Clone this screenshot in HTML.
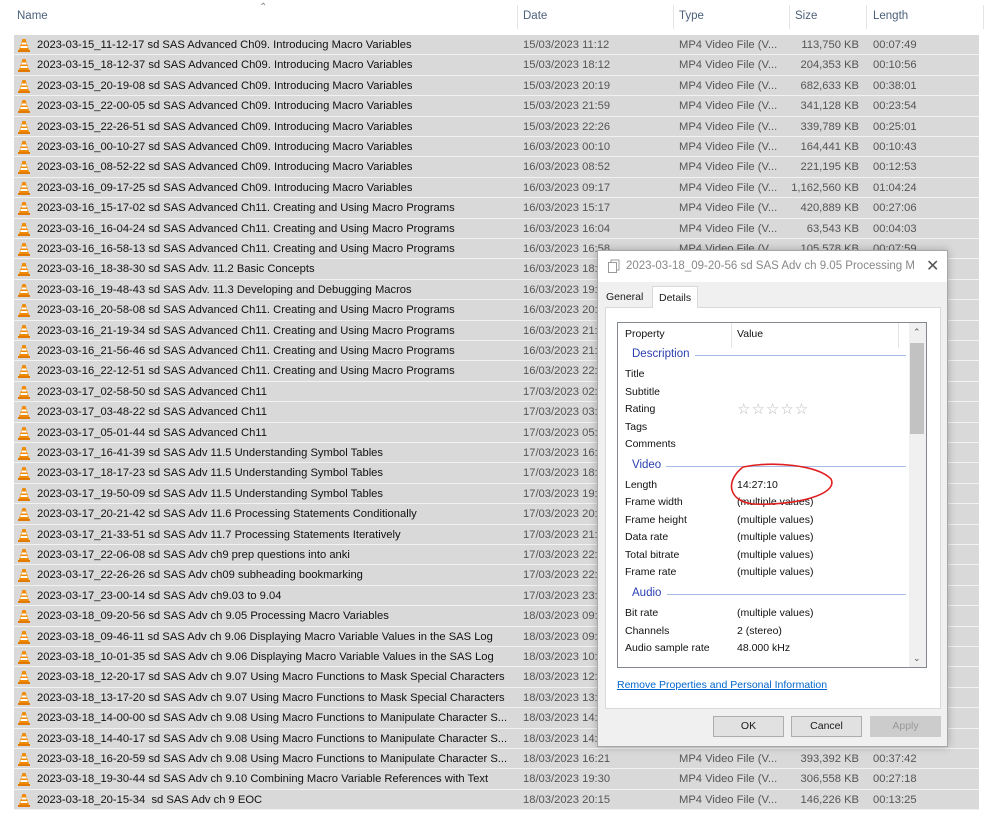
<!DOCTYPE html>
<html><head><meta charset="utf-8"><style>
*{margin:0;padding:0;box-sizing:border-box}
body{width:999px;height:822px;background:#fff;font-family:"Liberation Sans",sans-serif;font-size:11.2px;color:#1a1a1a;position:relative;overflow:hidden}
.h{position:absolute;top:10px;color:#4c607a;font-size:11.5px}
.sep{position:absolute;top:5px;width:1px;height:24px;background:#e5e5e5}
.r{position:absolute;left:14px;width:965px;height:20.4px;background:#d9d9d9;border-bottom:1px solid #f2f2f2}
.r span{position:absolute;top:4px;white-space:nowrap}
.n{left:23px;color:#111;max-width:478px;overflow:hidden}.d{left:509px;color:#555}.t{left:665px;color:#555}.s{right:120px;color:#555}.l{left:859px;color:#555}
.ic{position:absolute;left:4px;top:3px}
#dlg{position:absolute;left:597px;top:250px;width:351px;height:497px;background:#f0f0f0;border:1px solid #a8a8a8;box-shadow:0 0 8px rgba(0,0,0,.25)}
#tb{position:absolute;left:0;top:0;width:349px;height:31px;background:#fff}
.p{position:absolute;font-size:10.5px;color:#111;white-space:nowrap}
.g{position:absolute;font-size:11.5px;color:#2a3fb0}
.gl{position:absolute;height:1px;background:#a7bce6}
.btn{position:absolute;top:465px;width:71px;height:21px;background:#e1e1e1;border:1px solid #adadad;text-align:center;line-height:19px;font-size:10.5px}
</style></head><body>
<div class="h" style="left:17px">Name</div>
<div style="position:absolute;left:259px;top:2px;color:#888;font-size:10px">&#8963;</div>
<div class="sep" style="left:517px"></div><div class="h" style="left:523px">Date</div>
<div class="sep" style="left:673px"></div><div class="h" style="left:679px">Type</div>
<div class="sep" style="left:789px"></div><div class="h" style="left:795px">Size</div>
<div class="sep" style="left:866px"></div><div class="h" style="left:873px">Length</div>
<div class="sep" style="left:983px"></div>

<svg width="0" height="0" style="position:absolute"><defs><symbol id="cone" viewBox="0 0 12 14"><path d="M4.5 1h3l3.5 11h-10z" fill="#f08a00"/><path d="M3.8 4.5h4.4l.6 2h-5.6zM2.8 8h6.4l.6 2h-7.6z" fill="#fff"/><rect x="0" y="12" width="12" height="2" fill="#e07a00"/></symbol></defs></svg>

<div class="r" style="top:35px"><svg class="ic" width="12" height="14"><use href="#cone"/></svg><span class="n">2023-03-15_11-12-17 sd SAS Advanced Ch09. Introducing Macro Variables</span><span class="d">15/03/2023 11:12</span><span class="t">MP4 Video File (V...</span><span class="s">113,750 KB</span><span class="l">00:07:49</span></div>
<div class="r" style="top:55.4px"><svg class="ic" width="12" height="14"><use href="#cone"/></svg><span class="n">2023-03-15_18-12-37 sd SAS Advanced Ch09. Introducing Macro Variables</span><span class="d">15/03/2023 18:12</span><span class="t">MP4 Video File (V...</span><span class="s">204,353 KB</span><span class="l">00:10:56</span></div>
<div class="r" style="top:75.8px"><svg class="ic" width="12" height="14"><use href="#cone"/></svg><span class="n">2023-03-15_20-19-08 sd SAS Advanced Ch09. Introducing Macro Variables</span><span class="d">15/03/2023 20:19</span><span class="t">MP4 Video File (V...</span><span class="s">682,633 KB</span><span class="l">00:38:01</span></div>
<div class="r" style="top:96.2px"><svg class="ic" width="12" height="14"><use href="#cone"/></svg><span class="n">2023-03-15_22-00-05 sd SAS Advanced Ch09. Introducing Macro Variables</span><span class="d">15/03/2023 21:59</span><span class="t">MP4 Video File (V...</span><span class="s">341,128 KB</span><span class="l">00:23:54</span></div>
<div class="r" style="top:116.6px"><svg class="ic" width="12" height="14"><use href="#cone"/></svg><span class="n">2023-03-15_22-26-51 sd SAS Advanced Ch09. Introducing Macro Variables</span><span class="d">15/03/2023 22:26</span><span class="t">MP4 Video File (V...</span><span class="s">339,789 KB</span><span class="l">00:25:01</span></div>
<div class="r" style="top:137px"><svg class="ic" width="12" height="14"><use href="#cone"/></svg><span class="n">2023-03-16_00-10-27 sd SAS Advanced Ch09. Introducing Macro Variables</span><span class="d">16/03/2023 00:10</span><span class="t">MP4 Video File (V...</span><span class="s">164,441 KB</span><span class="l">00:10:43</span></div>
<div class="r" style="top:157.4px"><svg class="ic" width="12" height="14"><use href="#cone"/></svg><span class="n">2023-03-16_08-52-22 sd SAS Advanced Ch09. Introducing Macro Variables</span><span class="d">16/03/2023 08:52</span><span class="t">MP4 Video File (V...</span><span class="s">221,195 KB</span><span class="l">00:12:53</span></div>
<div class="r" style="top:177.8px"><svg class="ic" width="12" height="14"><use href="#cone"/></svg><span class="n">2023-03-16_09-17-25 sd SAS Advanced Ch09. Introducing Macro Variables</span><span class="d">16/03/2023 09:17</span><span class="t">MP4 Video File (V...</span><span class="s">1,162,560 KB</span><span class="l">01:04:24</span></div>
<div class="r" style="top:198.2px"><svg class="ic" width="12" height="14"><use href="#cone"/></svg><span class="n">2023-03-16_15-17-02 sd SAS Advanced Ch11. Creating and Using Macro Programs</span><span class="d">16/03/2023 15:17</span><span class="t">MP4 Video File (V...</span><span class="s">420,889 KB</span><span class="l">00:27:06</span></div>
<div class="r" style="top:218.6px"><svg class="ic" width="12" height="14"><use href="#cone"/></svg><span class="n">2023-03-16_16-04-24 sd SAS Advanced Ch11. Creating and Using Macro Programs</span><span class="d">16/03/2023 16:04</span><span class="t">MP4 Video File (V...</span><span class="s">63,543 KB</span><span class="l">00:04:03</span></div>
<div class="r" style="top:239px"><svg class="ic" width="12" height="14"><use href="#cone"/></svg><span class="n">2023-03-16_16-58-13 sd SAS Advanced Ch11. Creating and Using Macro Programs</span><span class="d">16/03/2023 16:58</span><span class="t">MP4 Video File (V...</span><span class="s">105,578 KB</span><span class="l">00:07:59</span></div>
<div class="r" style="top:259.4px"><svg class="ic" width="12" height="14"><use href="#cone"/></svg><span class="n">2023-03-16_18-38-30 sd SAS Adv. 11.2 Basic Concepts</span><span class="d">16/03/2023 18:38</span></div>
<div class="r" style="top:279.8px"><svg class="ic" width="12" height="14"><use href="#cone"/></svg><span class="n">2023-03-16_19-48-43 sd SAS Adv. 11.3 Developing and Debugging Macros</span><span class="d">16/03/2023 19:48</span></div>
<div class="r" style="top:300.2px"><svg class="ic" width="12" height="14"><use href="#cone"/></svg><span class="n">2023-03-16_20-58-08 sd SAS Advanced Ch11. Creating and Using Macro Programs</span><span class="d">16/03/2023 20:58</span></div>
<div class="r" style="top:320.6px"><svg class="ic" width="12" height="14"><use href="#cone"/></svg><span class="n">2023-03-16_21-19-34 sd SAS Advanced Ch11. Creating and Using Macro Programs</span><span class="d">16/03/2023 21:19</span></div>
<div class="r" style="top:341px"><svg class="ic" width="12" height="14"><use href="#cone"/></svg><span class="n">2023-03-16_21-56-46 sd SAS Advanced Ch11. Creating and Using Macro Programs</span><span class="d">16/03/2023 21:56</span></div>
<div class="r" style="top:361.4px"><svg class="ic" width="12" height="14"><use href="#cone"/></svg><span class="n">2023-03-16_22-12-51 sd SAS Advanced Ch11. Creating and Using Macro Programs</span><span class="d">16/03/2023 22:12</span></div>
<div class="r" style="top:381.8px"><svg class="ic" width="12" height="14"><use href="#cone"/></svg><span class="n">2023-03-17_02-58-50 sd SAS Advanced Ch11</span><span class="d">17/03/2023 02:58</span></div>
<div class="r" style="top:402.2px"><svg class="ic" width="12" height="14"><use href="#cone"/></svg><span class="n">2023-03-17_03-48-22 sd SAS Advanced Ch11</span><span class="d">17/03/2023 03:48</span></div>
<div class="r" style="top:422.6px"><svg class="ic" width="12" height="14"><use href="#cone"/></svg><span class="n">2023-03-17_05-01-44 sd SAS Advanced Ch11</span><span class="d">17/03/2023 05:01</span></div>
<div class="r" style="top:443px"><svg class="ic" width="12" height="14"><use href="#cone"/></svg><span class="n">2023-03-17_16-41-39 sd SAS Adv 11.5 Understanding Symbol Tables</span><span class="d">17/03/2023 16:41</span></div>
<div class="r" style="top:463.4px"><svg class="ic" width="12" height="14"><use href="#cone"/></svg><span class="n">2023-03-17_18-17-23 sd SAS Adv 11.5 Understanding Symbol Tables</span><span class="d">17/03/2023 18:17</span></div>
<div class="r" style="top:483.8px"><svg class="ic" width="12" height="14"><use href="#cone"/></svg><span class="n">2023-03-17_19-50-09 sd SAS Adv 11.5 Understanding Symbol Tables</span><span class="d">17/03/2023 19:50</span></div>
<div class="r" style="top:504.2px"><svg class="ic" width="12" height="14"><use href="#cone"/></svg><span class="n">2023-03-17_20-21-42 sd SAS Adv 11.6 Processing Statements Conditionally</span><span class="d">17/03/2023 20:21</span></div>
<div class="r" style="top:524.6px"><svg class="ic" width="12" height="14"><use href="#cone"/></svg><span class="n">2023-03-17_21-33-51 sd SAS Adv 11.7 Processing Statements Iteratively</span><span class="d">17/03/2023 21:33</span></div>
<div class="r" style="top:545px"><svg class="ic" width="12" height="14"><use href="#cone"/></svg><span class="n">2023-03-17_22-06-08 sd SAS Adv ch9 prep questions into anki</span><span class="d">17/03/2023 22:06</span></div>
<div class="r" style="top:565.4px"><svg class="ic" width="12" height="14"><use href="#cone"/></svg><span class="n">2023-03-17_22-26-26 sd SAS Adv ch09 subheading bookmarking</span><span class="d">17/03/2023 22:26</span></div>
<div class="r" style="top:585.8px"><svg class="ic" width="12" height="14"><use href="#cone"/></svg><span class="n">2023-03-17_23-00-14 sd SAS Adv ch9.03 to 9.04</span><span class="d">17/03/2023 23:00</span></div>
<div class="r" style="top:606.2px"><svg class="ic" width="12" height="14"><use href="#cone"/></svg><span class="n">2023-03-18_09-20-56 sd SAS Adv ch 9.05 Processing Macro Variables</span><span class="d">18/03/2023 09:20</span></div>
<div class="r" style="top:626.6px"><svg class="ic" width="12" height="14"><use href="#cone"/></svg><span class="n">2023-03-18_09-46-11 sd SAS Adv ch 9.06 Displaying Macro Variable Values in the SAS Log</span><span class="d">18/03/2023 09:46</span></div>
<div class="r" style="top:647px"><svg class="ic" width="12" height="14"><use href="#cone"/></svg><span class="n">2023-03-18_10-01-35 sd SAS Adv ch 9.06 Displaying Macro Variable Values in the SAS Log</span><span class="d">18/03/2023 10:01</span></div>
<div class="r" style="top:667.4px"><svg class="ic" width="12" height="14"><use href="#cone"/></svg><span class="n">2023-03-18_12-20-17 sd SAS Adv ch 9.07 Using Macro Functions to Mask Special Characters</span><span class="d">18/03/2023 12:20</span></div>
<div class="r" style="top:687.8px"><svg class="ic" width="12" height="14"><use href="#cone"/></svg><span class="n">2023-03-18_13-17-20 sd SAS Adv ch 9.07 Using Macro Functions to Mask Special Characters</span><span class="d">18/03/2023 13:17</span></div>
<div class="r" style="top:708.2px"><svg class="ic" width="12" height="14"><use href="#cone"/></svg><span class="n">2023-03-18_14-00-00 sd SAS Adv ch 9.08 Using Macro Functions to Manipulate Character S...</span><span class="d">18/03/2023 14:00</span></div>
<div class="r" style="top:728.6px"><svg class="ic" width="12" height="14"><use href="#cone"/></svg><span class="n">2023-03-18_14-40-17 sd SAS Adv ch 9.08 Using Macro Functions to Manipulate Character S...</span><span class="d">18/03/2023 14:40</span><span class="t">MP4 Video File (V...</span></div>
<div class="r" style="top:749px"><svg class="ic" width="12" height="14"><use href="#cone"/></svg><span class="n">2023-03-18_16-20-59 sd SAS Adv ch 9.08 Using Macro Functions to Manipulate Character S...</span><span class="d">18/03/2023 16:21</span><span class="t">MP4 Video File (V...</span><span class="s">393,392 KB</span><span class="l">00:37:42</span></div>
<div class="r" style="top:769.4px"><svg class="ic" width="12" height="14"><use href="#cone"/></svg><span class="n">2023-03-18_19-30-44 sd SAS Adv ch 9.10 Combining Macro Variable References with Text</span><span class="d">18/03/2023 19:30</span><span class="t">MP4 Video File (V...</span><span class="s">306,558 KB</span><span class="l">00:27:18</span></div>
<div class="r" style="top:789.8px"><svg class="ic" width="12" height="14"><use href="#cone"/></svg><span class="n">2023-03-18_20-15-34&nbsp; sd SAS Adv ch 9 EOC</span><span class="d">18/03/2023 20:15</span><span class="t">MP4 Video File (V...</span><span class="s">146,226 KB</span><span class="l">00:13:25</span></div>

<div id="dlg">
 <div id="tb">
  <svg style="position:absolute;left:9px;top:8px" width="14" height="14"><rect x="4" y="1" width="8" height="10" fill="#fff" stroke="#999"/><rect x="1.5" y="3.5" width="8" height="10" fill="#fff" stroke="#999"/></svg>
  <div style="position:absolute;left:28px;top:9px;width:288px;overflow:hidden;font-size:11.5px;color:#888;white-space:nowrap">2023-03-18_09-20-56 sd SAS Adv ch 9.05 Processing M...</div>
  <div style="position:absolute;left:328px;top:5px;font-size:16px;color:#555">&#10005;</div>
 </div>
 <div style="position:absolute;left:7px;top:56px;width:336px;height:402px;background:#fff;border:1px solid #d9d9d9"></div>
 <div style="position:absolute;left:8px;top:40px;font-size:10.5px">General</div>
 <div style="position:absolute;left:54px;top:35px;width:46px;height:22px;background:#fff;border:1px solid #d9d9d9;border-bottom:none;font-size:10.5px;padding:5px 0 0 6px">Details</div>
 <div style="position:absolute;left:19px;top:71px;width:310px;height:346px;background:#fff;border:1px solid #828790"></div>
 <div style="position:absolute;left:311px;top:72px;width:17px;height:344px;background:#f0f0f0"></div>
 <div style="position:absolute;left:312px;top:92px;width:14px;height:91px;background:#c2c2c2"></div>
 <div style="position:absolute;left:315px;top:76px;font-size:9px;color:#555">&#8963;</div>
 <div style="position:absolute;left:315px;top:402px;font-size:9px;color:#555">&#8964;</div>
 <div style="position:absolute;left:133px;top:72px;width:1px;height:25px;background:#e5e5e5"></div>
 <div style="position:absolute;left:300px;top:72px;width:1px;height:25px;background:#e5e5e5"></div>
 <div class="p" style="left:27px;top:77px">Property</div><div class="p" style="left:139px;top:77px">Value</div>
 <div class="g" style="left:34px;top:97px">Description</div><div class="gl" style="left:97px;top:104px;width:211px"></div>
 <div class="p" style="left:27px;top:117px">Title</div>
 <div class="p" style="left:27px;top:135px">Subtitle</div>
 <div class="p" style="left:27px;top:152px">Rating</div><div class="p" style="left:139px;top:149px;font-size:15px;color:#bbb;letter-spacing:1px">☆☆☆☆☆</div>
 <div class="p" style="left:27px;top:170px">Tags</div>
 <div class="p" style="left:27px;top:187px">Comments</div>
 <div class="g" style="left:34px;top:208px">Video</div><div class="gl" style="left:68px;top:215px;width:240px"></div>
 <div class="p" style="left:27px;top:228px">Length</div><div class="p" style="left:139px;top:228px">14:27:10</div>
 <div class="p" style="left:27px;top:245px">Frame width</div><div class="p" style="left:139px;top:245px">(multiple values)</div>
 <div class="p" style="left:27px;top:263px">Frame height</div><div class="p" style="left:139px;top:263px">(multiple values)</div>
 <div class="p" style="left:27px;top:280px">Data rate</div><div class="p" style="left:139px;top:280px">(multiple values)</div>
 <div class="p" style="left:27px;top:298px">Total bitrate</div><div class="p" style="left:139px;top:298px">(multiple values)</div>
 <div class="p" style="left:27px;top:315px">Frame rate</div><div class="p" style="left:139px;top:315px">(multiple values)</div>
 <div class="g" style="left:34px;top:336px">Audio</div><div class="gl" style="left:69px;top:343px;width:239px"></div>
 <div class="p" style="left:27px;top:356px">Bit rate</div><div class="p" style="left:139px;top:356px">(multiple values)</div>
 <div class="p" style="left:27px;top:374px">Channels</div><div class="p" style="left:139px;top:374px">2 (stereo)</div>
 <div class="p" style="left:27px;top:391px">Audio sample rate</div><div class="p" style="left:139px;top:391px">48.000 kHz</div>
 <div class="p" style="left:19px;top:428px;color:#0066cc;text-decoration:underline">Remove Properties and Personal Information</div>
 <div class="btn" style="left:115px">OK</div>
 <div class="btn" style="left:193px">Cancel</div>
 <div class="btn" style="left:272px;color:#999;background:#ccc;border-color:#ccc">Apply</div>
 <svg style="position:absolute;left:125px;top:210px" width="115" height="50"><path d="M20 6C50 0 95 4 108 18C116 34 70 45 30 43C5 40 2 20 20 6" fill="none" stroke="#e02020" stroke-width="1.6"/></svg>
</div>
</body></html>
